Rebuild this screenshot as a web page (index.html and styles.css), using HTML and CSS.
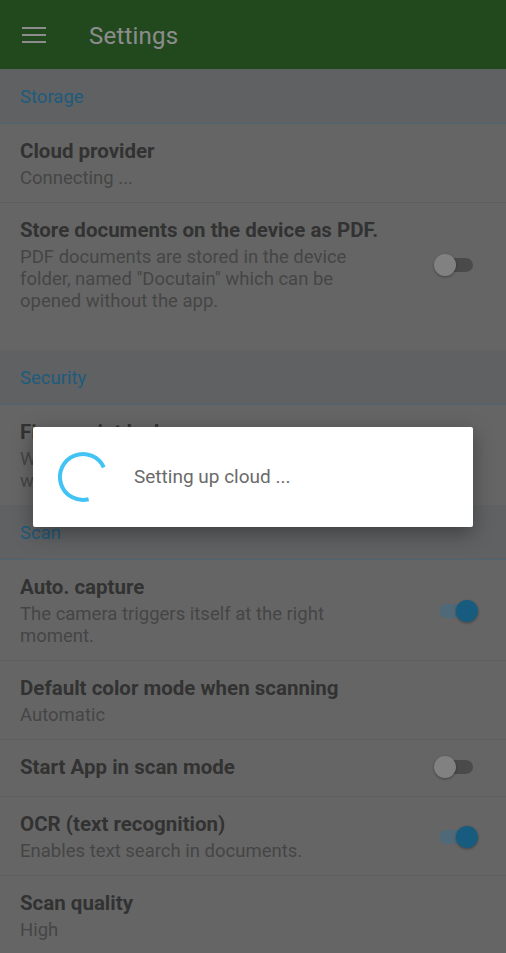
FILE: index.html
```html
<!DOCTYPE html>
<html lang="en">
<head>
    <meta charset="UTF-8">
    <meta name="viewport" content="width=device-width, initial-scale=1.0">
    <title>Settings</title>
    <link rel="stylesheet" href="styles.css">
</head>
<body>
    <div class="screen">
        <header class="toolbar">
            <svg class="menu-icon" width="24" height="18" viewBox="0 0 24 18">
                <rect x="0" y="1" width="24" height="2" fill="currentColor"/>
                <rect x="0" y="8" width="24" height="2" fill="currentColor"/>
                <rect x="0" y="15" width="24" height="2" fill="currentColor"/>
            </svg>
            <h1 class="toolbar-title">Settings</h1>
        </header>

        <main class="prefs">
            <div class="category">Storage</div>
            <div class="pref">
                <div class="pref-text">
                    <div class="pref-title">Cloud provider</div>
                    <div class="pref-summary">Connecting ...</div>
                </div>
            </div>
            <div class="pref pref-tall">
                <div class="pref-text">
                    <div class="pref-title">Store documents on the device as PDF.</div>
                    <div class="pref-summary">PDF documents are stored in the device folder, named "Docutain" which can be opened without the app.</div>
                </div>
                <span class="switch"></span>
            </div>

            <div class="category">Security</div>
            <div class="pref pref-last">
                <div class="pref-text">
                    <div class="pref-title">Fingerprint lock</div>
                    <div class="pref-summary">When activated, the app can only be opened with your fingerprint.</div>
                </div>
                <span class="switch"></span>
            </div>

            <div class="category">Scan</div>
            <div class="pref">
                <div class="pref-text">
                    <div class="pref-title">Auto. capture</div>
                    <div class="pref-summary">The camera triggers itself at the right moment.</div>
                </div>
                <span class="switch on"></span>
            </div>
            <div class="pref">
                <div class="pref-text">
                    <div class="pref-title">Default color mode when scanning</div>
                    <div class="pref-summary">Automatic</div>
                </div>
            </div>
            <div class="pref pref-single">
                <div class="pref-text">
                    <div class="pref-title">Start App in scan mode</div>
                </div>
                <span class="switch"></span>
            </div>
            <div class="pref">
                <div class="pref-text">
                    <div class="pref-title">OCR (text recognition)</div>
                    <div class="pref-summary">Enables text search in documents.</div>
                </div>
                <span class="switch on"></span>
            </div>
            <div class="pref">
                <div class="pref-text">
                    <div class="pref-title">Scan quality</div>
                    <div class="pref-summary">High</div>
                </div>
            </div>
        </main>

        <div class="scrim">
            <div class="dialog">
                <svg class="spinner" width="54" height="54" viewBox="0 0 54 54">
                    <path d="M47.8 17.3 A23 23 0 1 0 32.6 49.3" fill="none" stroke="#41c3f5" stroke-width="4"/>
                </svg>
                <span class="dialog-text">Setting up cloud ...</span>
            </div>
        </div>
    </div>
</body>
</html>
```

FILE: styles.css
```css
body {
    margin: 0;
    font-family: Roboto, "Noto Sans", Arial, sans-serif;
    background-color: #b9b9b9;
}

.screen {
    position: relative;
    width: 506px;
    height: 953px;
    overflow: hidden;
    background-color: #b9b9b9;
}

/* app bar */
.toolbar {
    height: 69px;
    display: flex;
    align-items: center;
    background-color: #3e8538;
    color: #fff;
    padding-left: 22px;
    box-sizing: border-box;
}
.menu-icon {
    display: block;
    margin-top: 1px;
}
.toolbar-title {
    margin: 3px 0 0 43px;
    font-size: 24px;
    font-weight: 400;
    letter-spacing: 0.2px;
}

/* preference list */
.category {
    height: 54px;
    display: flex;
    align-items: center;
    padding: 2px 0 0 20px;
    box-sizing: border-box;
    font-size: 18.5px;
    color: #3aa6e0;
    background-color: #afb1b5;
    border-bottom: 1px solid #91b6d1;
    box-sizing: content-box;
    height: 52px;
}
.pref {
    display: flex;
    align-items: center;
    padding: 14px 27px 13px 20px;
    border-bottom: 1px solid #aaaaaa;
}
.pref-tall {
    padding-bottom: 38px;
    border-bottom: none;
}
.pref-last {
    border-bottom: none;
}
.pref-single {
    padding-bottom: 16px;
}
.pref-text {
    flex: 1;
    max-width: 370px;
}
.pref-title {
    font-size: 20.5px;
    font-weight: 700;
    line-height: 26px;
    color: #5c5c5c;
}
.pref-summary {
    font-size: 18.5px;
    line-height: 22px;
    margin-top: 3px;
    color: #7f7f7f;
}

/* switch */
.switch {
    position: relative;
    width: 46px;
    height: 24px;
    margin-left: auto;
    flex-shrink: 0;
}
.switch::before {
    content: "";
    position: absolute;
    left: 6px;
    right: 6px;
    top: 5px;
    height: 14px;
    border-radius: 7px;
    background-color: #888888;
}
.switch::after {
    content: "";
    position: absolute;
    left: 1px;
    top: 1px;
    width: 22px;
    height: 22px;
    border-radius: 50%;
    background-color: #ececec;
    box-shadow: 0 1px 3px rgba(0, 0, 0, 0.35);
}
.switch.on::before {
    background-color: #93bfda;
}
.switch.on::after {
    left: auto;
    right: 1px;
    background-color: #2aa8e8;
}

/* dimmed background behind the progress dialog */
.scrim {
    position: absolute;
    inset: 0;
    background-color: rgba(0, 0, 0, 0.45);
    display: flex;
    align-items: center;
    justify-content: center;
}
.dialog {
    width: 440px;
    height: 100px;
    background-color: #fff;
    border-radius: 2px;
    box-shadow: 0 6px 20px rgba(0, 0, 0, 0.35);
    display: flex;
    align-items: center;
    padding-left: 23px;
    box-sizing: border-box;
}
.spinner {
    display: block;
}
.dialog-text {
    margin-left: 24px;
    font-size: 19px;
    color: #6a6a6a;
}
```
